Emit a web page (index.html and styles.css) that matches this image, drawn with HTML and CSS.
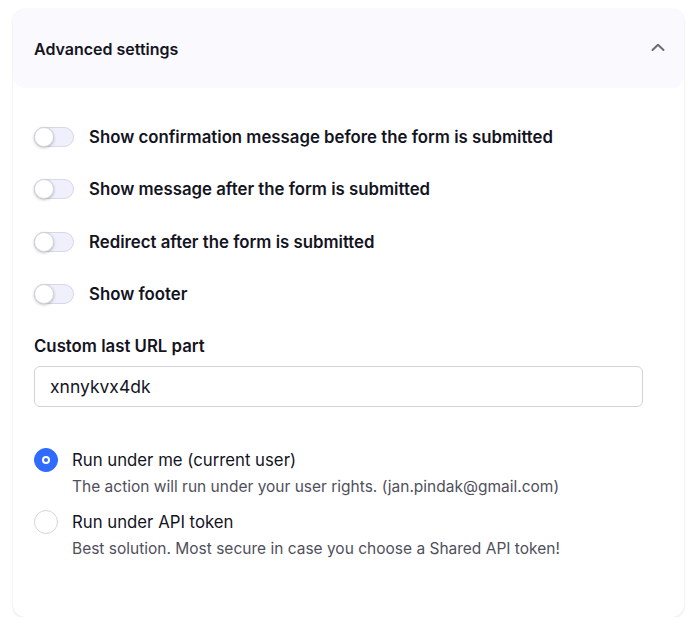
FILE: index.html
```html
<!DOCTYPE html>
<html lang="en">
<head>
<meta charset="utf-8">
<link rel="stylesheet" href="styles.css">
</head>
<body>
<div class="card">
  <div class="header">
    <span class="title">Advanced settings</span>
    <svg class="chevron" width="16" height="16" viewBox="0 0 16 16"><path d="M2.5 10 L8 4.8 L13.5 10" fill="none" stroke="#6b6b78" stroke-width="2" stroke-linecap="round" stroke-linejoin="round"/></svg>
  </div>
  <div class="body">
    <div class="toggles">
      <label class="toggle-row"><span class="toggle"><span class="knob"></span></span><span class="toggle-label">Show confirmation message before the form is submitted</span></label>
      <label class="toggle-row"><span class="toggle"><span class="knob"></span></span><span class="toggle-label">Show message after the form is submitted</span></label>
      <label class="toggle-row"><span class="toggle"><span class="knob"></span></span><span class="toggle-label">Redirect after the form is submitted</span></label>
      <label class="toggle-row"><span class="toggle"><span class="knob"></span></span><span class="toggle-label">Show footer</span></label>
    </div>
    <div class="field">
      <div class="field-label">Custom last URL part</div>
      <div class="input">xnnykvx4dk</div>
    </div>
    <div class="radios">
      <div class="radio-row">
        <span class="radio checked"><span class="dot"></span></span>
        <div class="radio-text">
          <div class="radio-label">Run under me (current user)</div>
          <div class="radio-desc">The action will run under your user rights. (jan.pindak@gmail.com)</div>
        </div>
      </div>
      <div class="radio-row">
        <span class="radio"></span>
        <div class="radio-text">
          <div class="radio-label">Run under API token</div>
          <div class="radio-desc">Best solution. Most secure in case you choose a Shared API token!</div>
        </div>
      </div>
    </div>
  </div>
</div>
</body>
</html>
```
FILE: styles.css
```css
* { box-sizing: border-box; }
body {
  margin: 0;
  padding: 9px 9px 0 13px;
  font-family: Inter, "Noto Sans", sans-serif;
  background: #ffffff;
  color: #14141f;
}
.card {
  width: 671px;
  height: 608px;
  border-radius: 12px;
  background: #fff;
  box-shadow: 0 1px 3px rgba(30, 30, 60, 0.10), 0 0 1px rgba(30, 30, 60, 0.08);
}
.header {
  height: 79px;
  background: #f9f9fe;
  border-radius: 12px;
  display: flex;
  align-items: center;
  justify-content: space-between;
  padding: 0 18px 0 21px;
}
.title {
  font-size: 16px;
  font-weight: 600;
  color: #14141f;
}
.chevron { display: block; margin-top: -2px; }
.body {
  padding: 39px 21px 0 21px;
}
.toggles {
  display: flex;
  flex-direction: column;
  gap: 32.4px;
}
.toggle-row {
  display: flex;
  align-items: center;
  height: 20px;
  gap: 15px;
}
.toggle {
  width: 40px;
  height: 20px;
  border-radius: 10px;
  background: #f0f0fc;
  border: 1px solid #d8d8e6;
  position: relative;
  flex: none;
}
.knob {
  position: absolute;
  left: -1px;
  top: -1px;
  width: 20px;
  height: 20px;
  border-radius: 50%;
  background: #fff;
  border: 1px solid #d4d4de;
  box-shadow: 0 1px 3px rgba(0, 0, 0, 0.25);
}
.toggle-label {
  font-size: 16.8px;
  font-weight: 600;
  color: #14141f;
}
.field {
  margin-top: 32px;
}
.field-label {
  font-size: 16.8px;
  font-weight: 600;
  line-height: 20px;
  color: #14141f;
}
.input {
  margin-top: 10px;
  width: 609px;
  height: 41px;
  border: 1px solid #d2d2de;
  border-radius: 6px;
  display: flex;
  align-items: center;
  padding-left: 15px;
  font-size: 17.5px;
  color: #14141f;
}
.radios {
  margin-top: 41px;
  display: flex;
  flex-direction: column;
  gap: 13px;
}
.radio-row {
  display: flex;
  gap: 14px;
}
.radio {
  width: 24px;
  height: 24px;
  border-radius: 50%;
  border: 1px solid #d4d4de;
  background: #fff;
  flex: none;
  display: flex;
  align-items: center;
  justify-content: center;
}
.radio.checked {
  background: #2f6bff;
  border-color: #2f6bff;
}
.dot {
  width: 8px;
  height: 8px;
  border-radius: 50%;
  background: transparent;
  border: 2.5px solid #fff;
}
.radio-label {
  font-size: 16.75px;
  line-height: 24px;
  color: #14141f;
}
.radio-desc {
  margin-top: 5px;
  font-size: 15.5px;
  line-height: 20px;
  color: #50505c;
}
```
